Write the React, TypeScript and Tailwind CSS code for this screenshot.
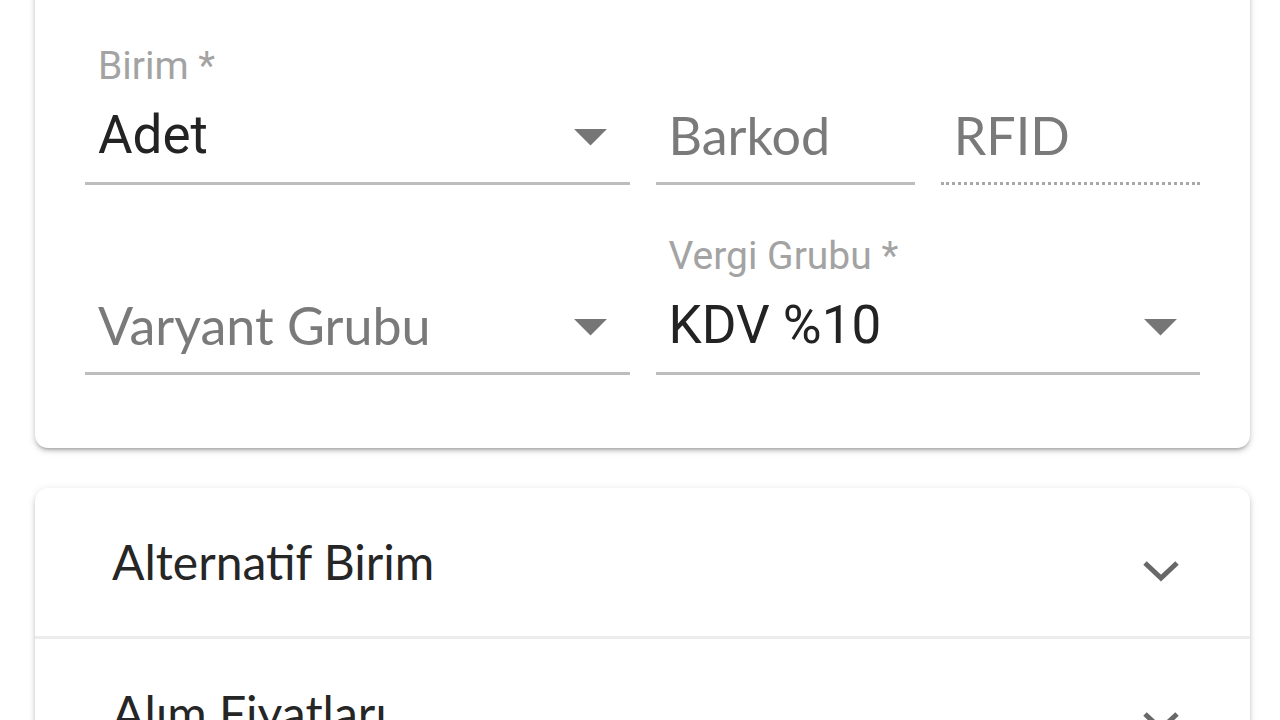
import React from "react";

const roboto = { fontFamily: "Roboto, 'Liberation Sans', sans-serif" };
const soft = { fontFamily: "Lato, 'Noto Sans', sans-serif" };

function DropArrow() {
  return (
    <svg viewBox="0 0 24 24" className="w-[79px] h-[79px] shrink-0" fill="#767676">
      <path d="M7 10l5 5 5-5z" />
    </svg>
  );
}

function Chevron() {
  return (
    <svg viewBox="0 0 40 24" className="w-[40px] h-[24px] shrink-0 mt-[16px]" fill="none">
      <polyline points="4,5 20,20 36,5" stroke="#686868" strokeWidth="5" strokeLinecap="butt" strokeLinejoin="miter" />
    </svg>
  );
}

type FieldProps = {
  label?: string;
  value?: string;
  placeholder?: string;
  select?: boolean;
  dotted?: boolean;
  className?: string;
};

function Field({ label, value, placeholder, select, dotted, className }: FieldProps) {
  return (
    <div className={"flex flex-col " + (className ?? "")}>
      <div
        className="h-[44px] pl-[13px] text-[39px] leading-[44px] text-[#a3a3a3] whitespace-nowrap"
        style={roboto}
      >
        {label ?? ""}
      </div>
      <div className="h-[94px] flex items-center pl-[13px]">
        {value ? (
          <span className="flex-1 text-[53px] leading-[60px] text-[#232323] whitespace-nowrap" style={roboto}>
            {value}
          </span>
        ) : (
          <span className="flex-1 text-[52px] leading-[60px] text-[#7a7a7a] whitespace-nowrap" style={soft}>
            {placeholder}
          </span>
        )}
        {select && <DropArrow />}
      </div>
      {dotted ? (
        <div className="h-[3px] border-b-[3px] border-dotted border-[#a8a8a8]" />
      ) : (
        <div className="h-[3px] bg-[#bdbdbd]" />
      )}
    </div>
  );
}

export default function App() {
  return (
    <div className="w-[1280px] h-[720px] overflow-hidden bg-white">
      <div className="pl-[35px] pr-[30px] flex flex-col gap-[40px]">
        <div className="mt-[-40px] bg-white rounded-[13px] px-[50px] pt-[84px] pb-[73px] shadow-[0_3px_3px_-2px_rgba(0,0,0,0.2),0_3px_4px_0_rgba(0,0,0,0.14),0_2px_9px_0_rgba(0,0,0,0.12)]">
          <div className="grid grid-cols-4 gap-x-[26px] gap-y-[49px]">
            <Field className="col-span-2" label="Birim *" value="Adet" select />
            <Field placeholder="Barkod" />
            <Field placeholder="RFID" dotted />
            <Field className="col-span-2" placeholder="Varyant Grubu" select />
            <Field className="col-span-2" label="Vergi Grubu *" value="KDV %10" select />
          </div>
        </div>
        <div className="bg-white rounded-t-[13px] shadow-[0_3px_3px_-2px_rgba(0,0,0,0.2),0_3px_4px_0_rgba(0,0,0,0.14),0_2px_9px_0_rgba(0,0,0,0.12)]">
          <div className="h-[148px] flex items-center justify-between pl-[77px] pr-[69px]">
            <span className="text-[48px] text-[#262626]" style={soft}>
              Alternatif Birim
            </span>
            <Chevron />
          </div>
          <div className="h-[3px] bg-[#ececec]" />
          <div className="h-[148px] flex items-center justify-between pl-[77px] pr-[69px]">
            <span className="text-[48px] text-[#262626]" style={soft}>
              Alım Fiyatları
            </span>
            <Chevron />
          </div>
        </div>
      </div>
    </div>
  );
}
